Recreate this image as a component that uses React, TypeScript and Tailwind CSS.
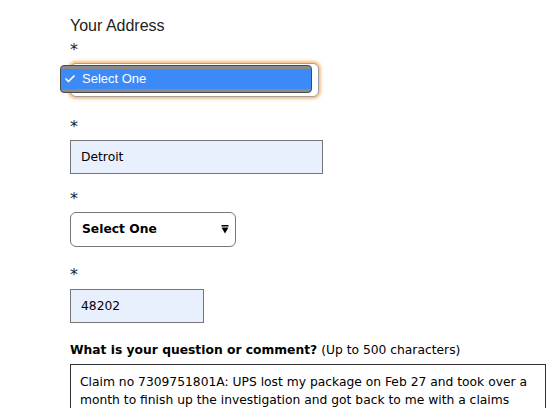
import { Check } from 'lucide-react';

const FIELD_FONT = "font-['DejaVu_Sans',sans-serif]";

// small black caret used by the closed select
function Caret() {
  return (
    <svg width="8" height="9" viewBox="0 0 8 9" className="shrink-0">
      <rect x="0.5" y="0" width="7" height="1.5" fill="#000" />
      <path d="M0.5 2.5 L7.5 2.5 L4 8.5 Z" fill="#000" />
    </svg>
  );
}

function Star({ className = '' }: { className?: string }) {
  return <div className={`h-4 leading-5 text-[16px] text-[#222] ${FIELD_FONT} ${className}`}>*</div>;
}

export default function App() {
  return (
    <div className="w-[559px] h-[408px] overflow-hidden bg-white">
      <div className="pl-[70px] pt-[16px]">
        <h2 className="text-[16px] leading-5 text-[#222] font-['Liberation_Sans',Arial,sans-serif]">Your Address</h2>

        {/* country select, open */}
        <Star className="mt-[4px]" />
        <div className="relative mt-[7px] w-[249px] h-[34px] rounded-[6px] border border-[#a0a0a0] bg-white shadow-[0_0_3px_2px_rgba(240,170,90,0.75)] flex items-center justify-end pr-[6px]">
          <Caret />
          <div className="absolute left-[-11px] top-[1px] w-[252px] h-[28px] rounded-[4px] border border-[#4a4a4a] bg-[#8a8a8a] py-[3px]">
            <div className="h-full bg-[#3b8af8] flex items-center gap-[6px] pl-[3px] text-white text-[13px] font-['Liberation_Sans',Arial,sans-serif]">
              <Check size={12} strokeWidth={3.5} />
              <span>Select One</span>
            </div>
          </div>
        </div>

        <Star className="mt-[20px]" />
        <input
          readOnly
          value="Detroit"
          className={`block mt-[7px] w-[253px] h-[34px] border border-[#767676] bg-[#e8f0fe] px-[10px] text-[12.3px] text-black outline-none ${FIELD_FONT}`}
        />

        <Star className="mt-[15px]" />
        <div className={`mt-[7px] w-[166px] h-[35px] rounded-[6px] border border-[#767676] bg-white flex items-center justify-between pl-[11px] pr-[6px] text-[12.3px] font-bold text-black ${FIELD_FONT}`}>
          <span>Select One</span>
          <Caret />
        </div>

        <Star className="mt-[18px]" />
        <input
          readOnly
          value="48202"
          className={`block mt-[8px] w-[134px] h-[34px] border border-[#767676] bg-[#e8f0fe] px-[10px] text-[12.3px] text-black outline-none ${FIELD_FONT}`}
        />

        <p className={`mt-[19px] leading-4 text-[12.3px] text-black ${FIELD_FONT}`}>
          <span className="font-bold">What is your question or comment?</span> (Up to 500 characters)
        </p>
        <textarea
          readOnly
          value="Claim no 7309751801A: UPS lost my package on Feb 27 and took over a month to finish up the investigation and got back to me with a claims form. I've entered all the details and can't seem to get anyone to help me."
          className={`block mt-[6px] w-[476px] h-[120px] border border-[#333] px-[9px] py-[8px] text-[12.3px] leading-[18px] text-black resize-none outline-none ${FIELD_FONT}`}
        />
      </div>
    </div>
  );
}
